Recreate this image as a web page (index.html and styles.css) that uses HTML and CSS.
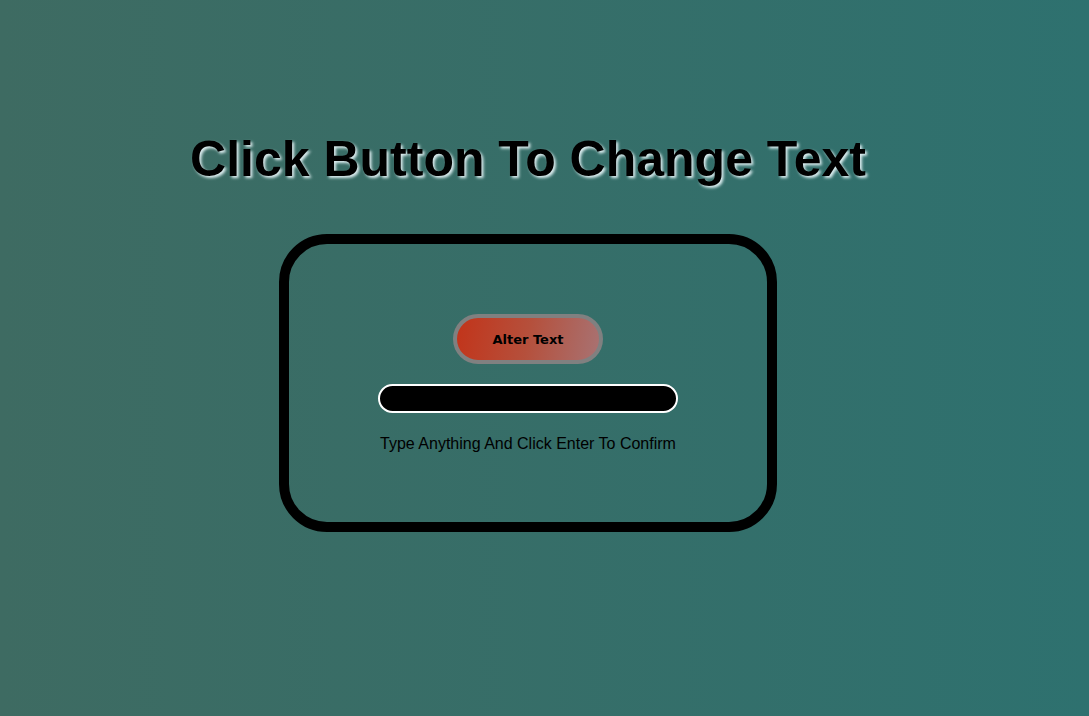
FILE: index.html
```html
<!DOCTYPE html>
<html lang="en">
<head>
<meta charset="utf-8">
<title>Change Text</title>
<link rel="stylesheet" href="styles.css">
</head>
<body>
<main class="page">
  <h1 class="title">Click Button To Change Text</h1>
  <section class="card">
    <button class="alter-btn" type="button">Alter Text</button>
    <input class="text-input" type="text" aria-label="Text">
    <p class="hint">Type Anything And Click Enter To Confirm</p>
  </section>
</main>
</body>
</html>
```

FILE: styles.css
```css
html, body {
  margin: 0;
  padding: 0;
}
body {
  min-height: 100vh;
  background: linear-gradient(to right, #3e6b62, #2e716f);
  font-family: "Liberation Sans", Arial, sans-serif;
}
.page {
  width: 1056px;
  display: flex;
  flex-direction: column;
  align-items: center;
  padding-top: 131px;
}
.title {
  margin: 0;
  font-size: 50px;
  line-height: 57px;
  font-weight: bold;
  color: #000;
  text-shadow: 2px 2px 3px rgba(240, 252, 255, 0.9);
}
.card {
  margin-top: 46px;
  box-sizing: border-box;
  width: 498px;
  height: 298px;
  border: 10px solid #000;
  border-radius: 48px;
  display: flex;
  flex-direction: column;
  align-items: center;
  padding-top: 70px;
}
.alter-btn {
  box-sizing: border-box;
  width: 150px;
  height: 50px;
  border: 4px solid #808080;
  border-radius: 25px;
  background: linear-gradient(100deg, #c2341a 0%, #b5503c 50%, #a87272 100%);
  font-family: "DejaVu Sans", Verdana, sans-serif;
  font-weight: bold;
  font-size: 13px;
  color: #000;
  padding: 0;
}
.text-input {
  box-sizing: border-box;
  margin-top: 20px;
  width: 300px;
  height: 29px;
  border: 2px solid #fff;
  border-radius: 15px;
  background: #000;
  color: #fff;
  outline: none;
}
.hint {
  margin: 22px 0 0;
  font-size: 16px;
  line-height: 18px;
  color: #000;
}
```
